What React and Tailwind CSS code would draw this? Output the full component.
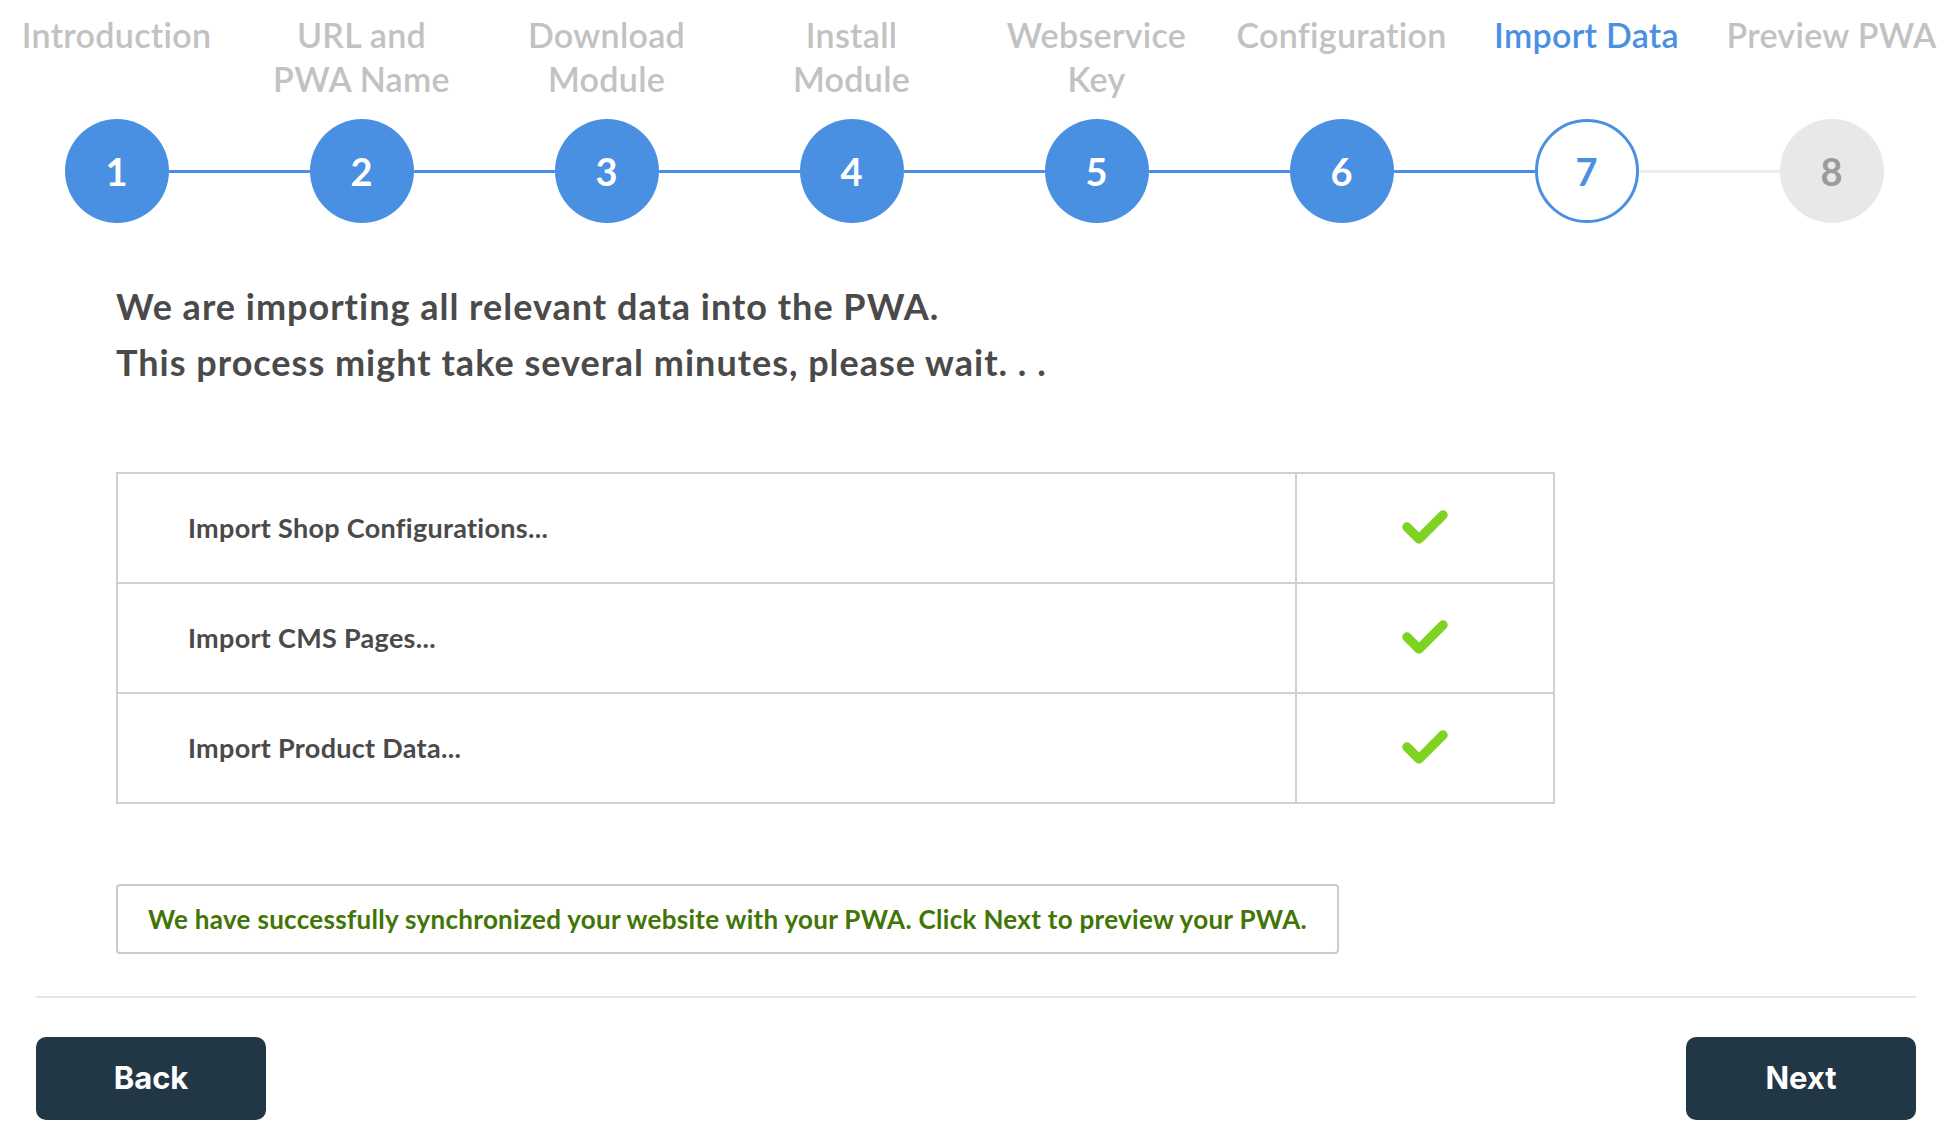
import { Fragment } from "react";

const steps = [
    ["Introduction"],
    ["URL and", "PWA Name"],
    ["Download", "Module"],
    ["Install", "Module"],
    ["Webservice", "Key"],
    ["Configuration"],
    ["Import Data"],
    ["Preview PWA"],
];

const rows = [
    "Import Shop Configurations...",
    "Import CMS Pages...",
    "Import Product Data...",
];

const active = 7;

function Check() {
    return (
        <svg width="46" height="36" viewBox="0 0 46 36">
            <polyline
                points="5,17 17,29 41,5"
                fill="none"
                stroke="#7ed321"
                strokeWidth="9.5"
                strokeLinecap="round"
                strokeLinejoin="round"
            />
        </svg>
    );
}

function Step({ index, label }) {
    const n = index + 1;
    const leftLine = n === 1 ? "bg-transparent" : n <= active ? "bg-[#4a90e2]" : "bg-[#eeeeee]";
    const rightLine = n === 8 ? "bg-transparent" : n < active ? "bg-[#4a90e2]" : "bg-[#eeeeee]";

    let circle = "bg-[#4a90e2] text-white";
    if (n === active) circle = "bg-white border-[3px] border-[#4a90e2] text-[#4a90e2]";
    if (n > active) circle = "bg-[#e8e8e8] text-[#9b9b9b]";

    return (
        <div className="flex flex-col items-center">
            <div
                className={
                    "h-[88px] text-center text-[34px] leading-[44px] font-semibold tracking-[0.3px] " +
                    (n === active ? "text-[#4a90e2]" : "text-[#c2c2c2]")
                }
            >
                {label.map((l, i) => (
                    <Fragment key={i}>
                        {l}
                        {i < label.length - 1 && <br />}
                    </Fragment>
                ))}
            </div>

            <div className="mt-[18px] flex w-full items-center">
                <div className={"h-[3px] flex-1 " + leftLine} />
                <div
                    className={
                        "flex h-[104px] w-[104px] shrink-0 items-center justify-center rounded-full text-[38px] font-bold " +
                        circle
                    }
                >
                    {n}
                </div>
                <div className={"h-[3px] flex-1 " + rightLine} />
            </div>
        </div>
    );
}

export default function App() {
    return (
        <div className="min-h-[1141px] w-full overflow-hidden bg-white font-['Lato',sans-serif]">

            <div className="-ml-[6px] grid w-[1960px] grid-cols-8 pt-[13px]">
                {steps.map((label, i) => (
                    <Step key={i} index={i} label={label} />
                ))}
            </div>

            <div className="ml-[36px] w-[1880px]">

                <div className="px-[80px]">

                    <h1 className="mt-[55px] text-[36px] leading-[56px] font-bold tracking-[1px] text-[#4a4a4a]">
                        We are importing all relevant data into the PWA.
                        <br />
                        This process might take several minutes, please wait. . .
                    </h1>

                    <div className="mt-[82px] w-[1439px] border-x-2 border-b-2 border-[#d0d0d0]">
                        {rows.map((r, i) => (
                            <div
                                key={i}
                                className="flex h-[110px] border-t-2 border-[#d0d0d0]"
                            >
                                <div className="flex flex-1 items-center border-r-2 border-[#d0d0d0] pl-[70px] text-[27px] font-bold tracking-[0.3px] text-[#4a4a4a]">
                                    {r}
                                </div>
                                <div className="flex w-[256px] items-center justify-center">
                                    <Check />
                                </div>
                            </div>
                        ))}
                    </div>

                    <div className="mt-[80px] inline-block rounded-[4px] border-2 border-[#cbcbcb] px-[30px] py-[16px] text-[26px] leading-[34px] font-bold tracking-[0.3px] text-[#417505]">
                        We have successfully synchronized your website with your PWA. Click Next to preview your PWA.
                    </div>

                </div>

                <div className="mt-[42px] h-[2px] bg-[#e6e6e6]" />

                <div className="mt-[39px] flex justify-between font-['Inter',sans-serif]">
                    <button className="h-[83px] w-[230px] rounded-[10px] bg-[#223746] text-[31px] font-bold text-white">
                        Back
                    </button>
                    <button className="h-[83px] w-[230px] rounded-[10px] bg-[#223746] text-[31px] font-bold text-white">
                        Next
                    </button>
                </div>

            </div>

        </div>
    );
}
